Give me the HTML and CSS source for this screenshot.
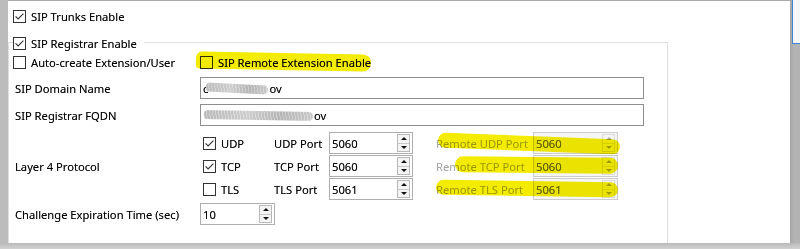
FILE: index.html
```html
<!DOCTYPE html>
<html>
<head>
<meta charset="utf-8">
<link rel="stylesheet" href="styles.css">
</head>
<body>
<div class="screen">
  <div class="strip-left"></div>
  <div class="panel">
    <label class="check top-row">
      <svg class="cb" width="13" height="13" viewBox="0 0 13 13"><rect x="0.5" y="0.5" width="12" height="12" fill="#fff" stroke="#333"/><path d="M2.6 6.4 L5.1 8.9 L10.4 3.6" fill="none" stroke="#333" stroke-width="1.1"/></svg>
      <span>SIP Trunks Enable</span>
    </label>
    <div class="group">
      <label class="check legend">
        <svg class="cb" width="13" height="13" viewBox="0 0 13 13"><rect x="0.5" y="0.5" width="12" height="12" fill="#fff" stroke="#333"/><path d="M2.6 6.4 L5.1 8.9 L10.4 3.6" fill="none" stroke="#333" stroke-width="1.1"/></svg>
        <span>SIP Registrar Enable</span>
      </label>
      <div class="auto-row">
        <label class="check first">
          <svg class="cb" width="13" height="13" viewBox="0 0 13 13"><rect x="0.5" y="0.5" width="12" height="12" fill="#fff" stroke="#333"/></svg>
          <span>Auto-create Extension/User</span>
        </label>
        <label class="check">
          <svg class="cb" width="13" height="13" viewBox="0 0 13 13"><rect x="0.5" y="0.5" width="12" height="12" fill="#fff" stroke="#333"/></svg>
          <span>SIP Remote Extension Enable</span>
        </label>
      </div>
      <div class="field-row domain">
        <span class="lbl">SIP Domain Name</span>
        <div class="text-input">c<span class="smudge s1"></span>ov</div>
      </div>
      <div class="field-row fqdn">
        <span class="lbl">SIP Registrar FQDN</span>
        <div class="text-input"><span class="smudge s2"></span>ov</div>
      </div>
      <div class="field-row layer">
        <span class="lbl">Layer 4 Protocol</span>
        <div class="proto">
          <label class="check pcheck">
            <svg class="cb" width="13" height="13" viewBox="0 0 13 13"><rect x="0.5" y="0.5" width="12" height="12" fill="#fff" stroke="#333"/><path d="M2.6 6.4 L5.1 8.9 L10.4 3.6" fill="none" stroke="#333" stroke-width="1.1"/></svg>
            <span>UDP</span>
          </label>
          <span class="plabel">UDP Port</span>
          <div class="spin"><span class="val">5060</span><span class="btns"><i class="btn"><b class="up"></b></i><i class="btn"><b class="dn"></b></i></span></div>
          <span class="rlabel">Remote UDP Port</span>
          <div class="spin off"><span class="val">5060</span><span class="btns"><i class="btn"><b class="up"></b></i><i class="btn"><b class="dn"></b></i></span></div>

          <label class="check pcheck">
            <svg class="cb" width="13" height="13" viewBox="0 0 13 13"><rect x="0.5" y="0.5" width="12" height="12" fill="#fff" stroke="#333"/><path d="M2.6 6.4 L5.1 8.9 L10.4 3.6" fill="none" stroke="#333" stroke-width="1.1"/></svg>
            <span>TCP</span>
          </label>
          <span class="plabel">TCP Port</span>
          <div class="spin"><span class="val">5060</span><span class="btns"><i class="btn"><b class="up"></b></i><i class="btn"><b class="dn"></b></i></span></div>
          <span class="rlabel">Remote TCP Port</span>
          <div class="spin off"><span class="val">5060</span><span class="btns"><i class="btn"><b class="up"></b></i><i class="btn"><b class="dn"></b></i></span></div>

          <label class="check pcheck">
            <svg class="cb" width="13" height="13" viewBox="0 0 13 13"><rect x="0.5" y="0.5" width="12" height="12" fill="#fff" stroke="#333"/></svg>
            <span>TLS</span>
          </label>
          <span class="plabel">TLS Port</span>
          <div class="spin"><span class="val">5061</span><span class="btns"><i class="btn"><b class="up"></b></i><i class="btn"><b class="dn"></b></i></span></div>
          <span class="rlabel">Remote TLS Port</span>
          <div class="spin off"><span class="val">5061</span><span class="btns"><i class="btn"><b class="up"></b></i><i class="btn"><b class="dn"></b></i></span></div>
        </div>
      </div>
      <div class="field-row challenge">
        <span class="lbl">Challenge Expiration Time (sec)</span>
        <div class="spin short"><span class="val">10</span><span class="btns"><i class="btn"><b class="up"></b></i><i class="btn"><b class="dn"></b></i></span></div>
      </div>
    </div>
  </div>
  <div class="strip-right"><div class="other-window"></div></div>
  <div class="strip-bottom"></div>

  <span class="hl hl-ext"></span>
  <span class="hl hl-udp"></span>
  <span class="hl hl-tcp"></span>
  <span class="hl hl-tls"></span>
</div>
</body>
</html>
```

FILE: styles.css
```css
* { box-sizing: border-box; }
html, body { margin: 0; padding: 0; }
body {
  width: 800px;
  height: 249px;
  overflow: hidden;
  background: #bdbdbd;
  font-family: "Noto Sans", "Open Sans", sans-serif;
  font-size: 11.2px;
  color: #000;
  text-shadow: 0 0 0.4px rgba(0, 0, 0, 0.45);
}
.screen {
  position: relative;
  display: grid;
  grid-template-columns: 8px 782px 10px;
  grid-template-rows: 243px 6px;
  width: 800px;
  height: 249px;
}
.strip-left { background: #bcbcbc; }
.strip-right { background: linear-gradient(to right, #a6a6a6, #b3b3b3 4px); }
.other-window {
  margin-left: 2px;
  height: 44px;
  border-left: 1px solid #3f84d2;
  border-bottom: 1px solid #3f84d2;
  background: #f6f7f9;
}
.strip-bottom {
  grid-column: 1 / 4;
  background: linear-gradient(#bababa, #d2d2d2);
}
.panel {
  background: #fff;
  border-top: 1px solid #a8a8a8;
  padding-top: 9px;
  display: flex;
  flex-direction: column;
}
.check {
  display: flex;
  align-items: center;
  gap: 5px;
  height: 13px;
  white-space: nowrap;
}
.cb { flex: none; display: block; }
.top-row { padding-left: 5px; }

.group {
  margin-top: 19px;
  width: 660px;
  flex: 1;
  border: 1px solid #dedede;
  border-bottom: none;
}
.legend {
  margin-top: -6px;
  margin-left: 4px;
  width: max-content;
  padding-right: 7px;
  background: #fff;
}
.auto-row {
  display: flex;
  margin-top: 6px;
  padding-left: 4px;
}
.auto-row .first { width: 187px; }

.field-row {
  display: flex;
  align-items: center;
  padding-left: 6px;
}
.lbl { width: 185px; flex: none; white-space: nowrap; }
.domain { margin-top: 8px; }
.fqdn { margin-top: 5px; }
.layer { margin-top: 6px; }
.challenge { margin-top: 3px; }

.text-input {
  width: 444px;
  height: 22px;
  border: 1px solid #8e8e8e;
  display: flex;
  align-items: center;
  padding-left: 2px;
  white-space: nowrap;
}
.smudge {
  display: inline-block;
  height: 9px;
  border-radius: 5px 6px 6px 4px;
  background:
    repeating-linear-gradient(80deg, rgba(255,255,255,0.35) 0 1px, transparent 1px 3px),
    linear-gradient(100deg, #b9b9b9, #cdcdcd 40%, #b4b4b4 70%, #c9c9c9);
  filter: blur(0.5px);
}
.s1 { width: 62px; margin: 0 1px 0 -2px; transform: rotate(3deg); }
.s2 { width: 109px; margin: 0 1px 0 1px; transform: rotate(1deg); }

.proto {
  display: grid;
  grid-template-columns: 74px 55px 84px 120px 85px;
  grid-auto-rows: 22px;
  row-gap: 1px;
  align-items: center;
}
.pcheck { padding-left: 3px; }
.plabel, .rlabel { white-space: nowrap; }
.rlabel { padding-left: 23px; color: #a3a3a3; text-shadow: none; }

.spin {
  height: 22px;
  border: 1px solid #aeaeae;
  display: flex;
  align-items: center;
  background: #fff;
}
.spin.short { width: 75px; }
.val { flex: 1; padding-left: 2px; }
.btns {
  width: 13px;
  height: 18px;
  margin-right: 2px;
  display: flex;
  flex-direction: column;
  border: 1px solid #b9b9b9;
  background: #f4f4f4;
}
.btn {
  flex: 1;
  display: flex;
  align-items: center;
  justify-content: center;
}
.btn + .btn { border-top: 1px solid #c9c9c9; }
.up, .dn {
  width: 0;
  height: 0;
  border-left: 3px solid transparent;
  border-right: 3px solid transparent;
}
.up { border-bottom: 3px solid #111; }
.dn { border-top: 3px solid #111; }

.spin.off { background: #f5f5f5; border-color: #cccccc; color: #6d6d6d; }
.spin.off .btns { border-color: #dcdcdc; background: #f5f5f5; }
.spin.off .btn + .btn { border-top-color: #e2e2e2; }
.spin.off .up { border-bottom-color: #a6a6a6; }
.spin.off .dn { border-top-color: #a6a6a6; }

.hl {
  position: absolute;
  background: #f4ec00;
  mix-blend-mode: multiply;
  border-radius: 8px;
  pointer-events: none;
}
.hl-ext { left: 196px; top: 53px; width: 175px; height: 17px; transform: rotate(1deg); border-radius: 6px 8px 8px 4px; }
.hl-udp { left: 438px; top: 136px; width: 182px; height: 15px; transform: rotate(2.2deg); }
.hl-tcp { left: 455px; top: 157px; width: 163px; height: 16px; transform: rotate(0.5deg); }
.hl-tls { left: 436px; top: 181px; width: 182px; height: 15px; transform: rotate(0.8deg); }
```
